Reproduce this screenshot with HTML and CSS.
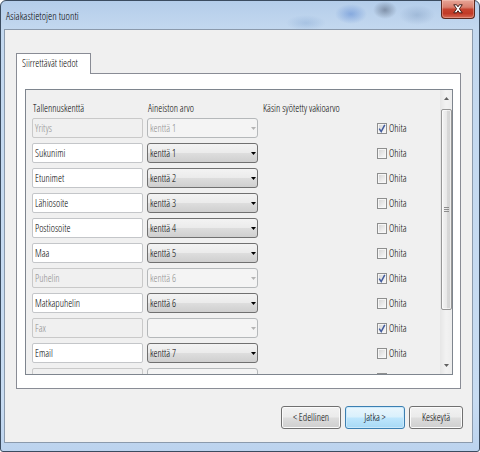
FILE: index.html
```html
<!DOCTYPE html>
<html lang="fi">
<head>
<meta charset="utf-8">
<title>Asiakastietojen tuonti</title>
<link rel="stylesheet" href="styles.css">
</head>
<body>
<div class="window">
  <div class="titlebar">
    <span class="title">Asiakastietojen tuonti</span>
    <div class="close">
      <svg width="34" height="18" viewBox="0 0 34 18"><path d="M12.5 4.5h3l1.5 2.2 1.5-2.2h3l-3 4.3 3 4.3h-3L17 10.9l-1.5 2.2h-3l3-4.3z" fill="#fff" stroke="#3b1510" stroke-width="1" stroke-linejoin="round"/></svg>
    </div>
  </div>
  <div class="client">
    <div class="tabs"><div class="tab">Siirrettävät tiedot</div></div>
    <div class="panel">
      <div class="group">
        <div class="sheet">
          <div class="row head"><span>Tallennuskenttä</span><span>Aineiston arvo</span><span>Käsin syötetty vakioarvo</span></div>

          <div class="row">
            <div class="field disabled">Yritys</div>
            <div class="combo disabled"><span>kenttä 1</span><svg class="arrow" width="5" height="3" viewBox="0 0 5 3"><path d="M0 0h5L2.5 3z"/></svg></div>
            <div class="check"><span class="box"><svg width="8" height="9" viewBox="0 0 8 9"><path d="M1.2 4.6 3.2 7.6 6.8 0.8" fill="none" stroke="#425c9e" stroke-width="1.5"/></svg></span>Ohita</div>
          </div>
          <div class="row">
            <div class="field">Sukunimi</div>
            <div class="combo"><span>kenttä 1</span><svg class="arrow" width="5" height="3" viewBox="0 0 5 3"><path d="M0 0h5L2.5 3z"/></svg></div>
            <div class="check"><span class="box"></span>Ohita</div>
          </div>
          <div class="row">
            <div class="field">Etunimet</div>
            <div class="combo"><span>kenttä 2</span><svg class="arrow" width="5" height="3" viewBox="0 0 5 3"><path d="M0 0h5L2.5 3z"/></svg></div>
            <div class="check"><span class="box"></span>Ohita</div>
          </div>
          <div class="row">
            <div class="field">Lähiosoite</div>
            <div class="combo"><span>kenttä 3</span><svg class="arrow" width="5" height="3" viewBox="0 0 5 3"><path d="M0 0h5L2.5 3z"/></svg></div>
            <div class="check"><span class="box"></span>Ohita</div>
          </div>
          <div class="row">
            <div class="field">Postiosoite</div>
            <div class="combo"><span>kenttä 4</span><svg class="arrow" width="5" height="3" viewBox="0 0 5 3"><path d="M0 0h5L2.5 3z"/></svg></div>
            <div class="check"><span class="box"></span>Ohita</div>
          </div>
          <div class="row">
            <div class="field">Maa</div>
            <div class="combo"><span>kenttä 5</span><svg class="arrow" width="5" height="3" viewBox="0 0 5 3"><path d="M0 0h5L2.5 3z"/></svg></div>
            <div class="check"><span class="box"></span>Ohita</div>
          </div>
          <div class="row">
            <div class="field disabled">Puhelin</div>
            <div class="combo disabled"><span>kenttä 6</span><svg class="arrow" width="5" height="3" viewBox="0 0 5 3"><path d="M0 0h5L2.5 3z"/></svg></div>
            <div class="check"><span class="box"><svg width="8" height="9" viewBox="0 0 8 9"><path d="M1.2 4.6 3.2 7.6 6.8 0.8" fill="none" stroke="#425c9e" stroke-width="1.5"/></svg></span>Ohita</div>
          </div>
          <div class="row">
            <div class="field">Matkapuhelin</div>
            <div class="combo"><span>kenttä 6</span><svg class="arrow" width="5" height="3" viewBox="0 0 5 3"><path d="M0 0h5L2.5 3z"/></svg></div>
            <div class="check"><span class="box"></span>Ohita</div>
          </div>
          <div class="row">
            <div class="field disabled">Fax</div>
            <div class="combo disabled"><span></span><svg class="arrow" width="5" height="3" viewBox="0 0 5 3"><path d="M0 0h5L2.5 3z"/></svg></div>
            <div class="check"><span class="box"><svg width="8" height="9" viewBox="0 0 8 9"><path d="M1.2 4.6 3.2 7.6 6.8 0.8" fill="none" stroke="#425c9e" stroke-width="1.5"/></svg></span>Ohita</div>
          </div>
          <div class="row">
            <div class="field">Email</div>
            <div class="combo"><span>kenttä 7</span><svg class="arrow" width="5" height="3" viewBox="0 0 5 3"><path d="M0 0h5L2.5 3z"/></svg></div>
            <div class="check"><span class="box"></span>Ohita</div>
          </div>
          <div class="row">
            <div class="field disabled"></div>
            <div class="combo disabled"><span></span></div>
            <div class="check"><span class="box"></span></div>
          </div>
        </div>
        <div class="scrollbar">
          <div class="sb-btn"><svg width="5" height="3" viewBox="0 0 5 3"><path d="M0 3h5L2.5 0z" fill="#606060"/></svg></div>
          <div class="thumb"><span class="grip"></span></div>
          <div class="sb-space"></div>
          <div class="sb-btn"><svg width="5" height="3" viewBox="0 0 5 3"><path d="M0 0h5L2.5 3z" fill="#606060"/></svg></div>
        </div>
      </div>
    </div>
    <div class="actions">
      <div class="btn wide">&lt; Edellinen</div>
      <div class="btn wide default">Jatka &gt;</div>
      <div class="btn">Keskeytä</div>
    </div>
  </div>
</div>
</body>
</html>
```

FILE: styles.css
```css
* { box-sizing: border-box; }

html, body {
  margin: 0;
  padding: 0;
}

body {
  width: 480px;
  height: 452px;
  overflow: hidden;
  background: #ffffff;
  font-family: "Open Sans", "Roboto Condensed", "DejaVu Sans Condensed", sans-serif;
  font-stretch: 75%;
  font-weight: 300;
  font-size: 10px;
  color: #000;
}

.window {
  width: 480px;
  height: 452px;
  border: 1px solid #3b4c60;
  border-radius: 6px 6px 3px 3px;
  display: flex;
  flex-direction: column;
  background:
    radial-gradient(ellipse 16px 10px at 350px 13px, rgba(70, 120, 205, 0.45), rgba(70, 120, 205, 0)),
    radial-gradient(ellipse 12px 9px at 384px 9px, rgba(60, 70, 90, 0.45), rgba(60, 70, 90, 0)),
    radial-gradient(ellipse 18px 10px at 416px 14px, rgba(110, 140, 180, 0.35), rgba(110, 140, 180, 0)),
    radial-gradient(ellipse 20px 8px at 305px 22px, rgba(110, 150, 200, 0.3), rgba(110, 150, 200, 0)),
    linear-gradient(180deg, #b4cdea 0, #c3d8ef 28px, #c8dcf2 400px, #bcd3ee 100%);
}

.titlebar {
  height: 28px;
  flex: none;
  display: flex;
  justify-content: space-between;
  align-items: flex-start;
  padding-left: 5px;
}

.title {
  margin-top: 9px;
  font-size: 10.5px;
  line-height: 12px;
  color: #000;
}

.close {
  width: 34px;
  height: 19px;
  margin-right: 4px;
  margin-top: -1px;
  border: 1px solid #5c281e;
  border-top: none;
  border-radius: 0 0 4px 4px;
  background: linear-gradient(180deg, #e7a596 0, #d9806f 40%, #c6432f 52%, #c13a27 75%, #d66a55 100%);
  box-shadow: inset 0 0 0 1px rgba(255, 220, 210, 0.35);
  display: flex;
  align-items: center;
  justify-content: center;
}

.client {
  height: 414px;
  margin: 0 6px 0 3px;
  border: 1px solid #8b9aac;
  background: #f0f0f0;
  display: flex;
  flex-direction: column;
}

.tabs {
  padding: 23px 0 0 11px;
  display: flex;
}

.tab {
  width: 75px;
  height: 21px;
  margin-bottom: -1px;
  position: relative;
  z-index: 1;
  border: 1px solid #898c95;
  border-bottom: none;
  background: #ffffff;
  padding: 0 0 0 5px;
  line-height: 19px;
  white-space: nowrap;
}

.panel {
  height: 316px;
  margin: 0 11px 0 11px;
  border: 1px solid #898c95;
  background: #ffffff;
  padding: 15px 7px 0 8px;
}

.group {
  height: 286px;
  border: 1px solid #7e858e;
  background: #f0f0f0;
  display: flex;
}

.sheet {
  flex: 1;
  overflow: hidden;
  padding: 12px 0 0 6px;
}

.row {
  display: grid;
  grid-template-columns: 111px 111px 1fr;
  column-gap: 4px;
  height: 20px;
  margin-bottom: 5px;
}

.row.head {
  height: 12px;
  margin-bottom: 4px;
  line-height: 12px;
}

.row.head span {
  padding-left: 1px;
  white-space: nowrap;
}

.field {
  border: 1px solid #c4c6c9;
  border-radius: 2px;
  background: #ffffff;
  padding-left: 2px;
  line-height: 18px;
  white-space: nowrap;
  overflow: hidden;
}

.field.disabled {
  background: #f0f0f0;
  border-color: #c9c9c9;
  color: #8e8e8e;
}

.combo {
  border: 1px solid #707070;
  border-radius: 3px;
  background: linear-gradient(180deg, #f3f3f3 0, #ebebeb 48%, #dddddd 52%, #cfcfcf 100%);
  display: flex;
  align-items: center;
  justify-content: space-between;
  padding: 0 0 0 2px;
  line-height: 18px;
  white-space: nowrap;
}

.combo .arrow {
  margin-right: 1px;
  fill: #000;
}

.combo.disabled {
  background: #f4f4f4;
  border-color: #b5b8ba;
  color: #8e8e8e;
}

.combo.disabled .arrow {
  fill: #b4b4b4;
}

.check {
  display: flex;
  align-items: center;
  gap: 2px;
  padding-left: 115px;
  white-space: nowrap;
}

.box {
  width: 10px;
  height: 11px;
  flex: none;
  border: 1px solid #8e8f8f;
  background: linear-gradient(135deg, #d2d2d2 0, #ececec 60%, #fafafa 100%);
  box-shadow: inset 0 0 0 1px #f6f6f6;
  display: flex;
  align-items: center;
  justify-content: center;
}

.scrollbar {
  width: 12px;
  flex: none;
  background: linear-gradient(90deg, #e6e6e6 0, #f2f2f2 50%, #ededed 100%);
  display: flex;
  flex-direction: column;
}

.sb-btn {
  height: 17px;
  flex: none;
  display: flex;
  align-items: center;
  justify-content: center;
}

.thumb {
  height: 201px;
  flex: none;
  margin: 2px 0 0 1px;
  width: 11px;
  border: 1px solid #979797;
  border-radius: 2px;
  background: linear-gradient(90deg, #f4f4f4 0, #e9e9e9 50%, #d9d9d9 51%, #d4d4d4 100%);
  box-shadow: inset 0 0 0 1px rgba(255, 255, 255, 0.6);
  display: flex;
  align-items: center;
  justify-content: center;
}

.grip {
  width: 5px;
  height: 5px;
  background: repeating-linear-gradient(180deg, #8c8c8c 0, #8c8c8c 1px, transparent 1px, transparent 2px);
}

.sb-space {
  flex: 1;
}

.actions {
  display: flex;
  justify-content: flex-end;
  gap: 4px;
  margin: 17px 9px 0 0;
}

.btn {
  width: 54px;
  height: 23px;
  border: 1px solid #707070;
  border-radius: 3px;
  background: linear-gradient(180deg, #f2f2f2 0, #ebebeb 48%, #dddddd 52%, #cfcfcf 100%);
  box-shadow: inset 0 0 0 1px #fbfbfb;
  text-align: center;
  line-height: 21px;
  white-space: nowrap;
}

.btn.wide {
  width: 60px;
}

.btn.default {
  border-color: #3c7fb1;
  background: linear-gradient(180deg, #eaf6fd 0, #d9f0fc 48%, #bee6fd 52%, #a7d9f5 100%);
  box-shadow: inset 0 0 0 1px #cbe9fb;
}
```
